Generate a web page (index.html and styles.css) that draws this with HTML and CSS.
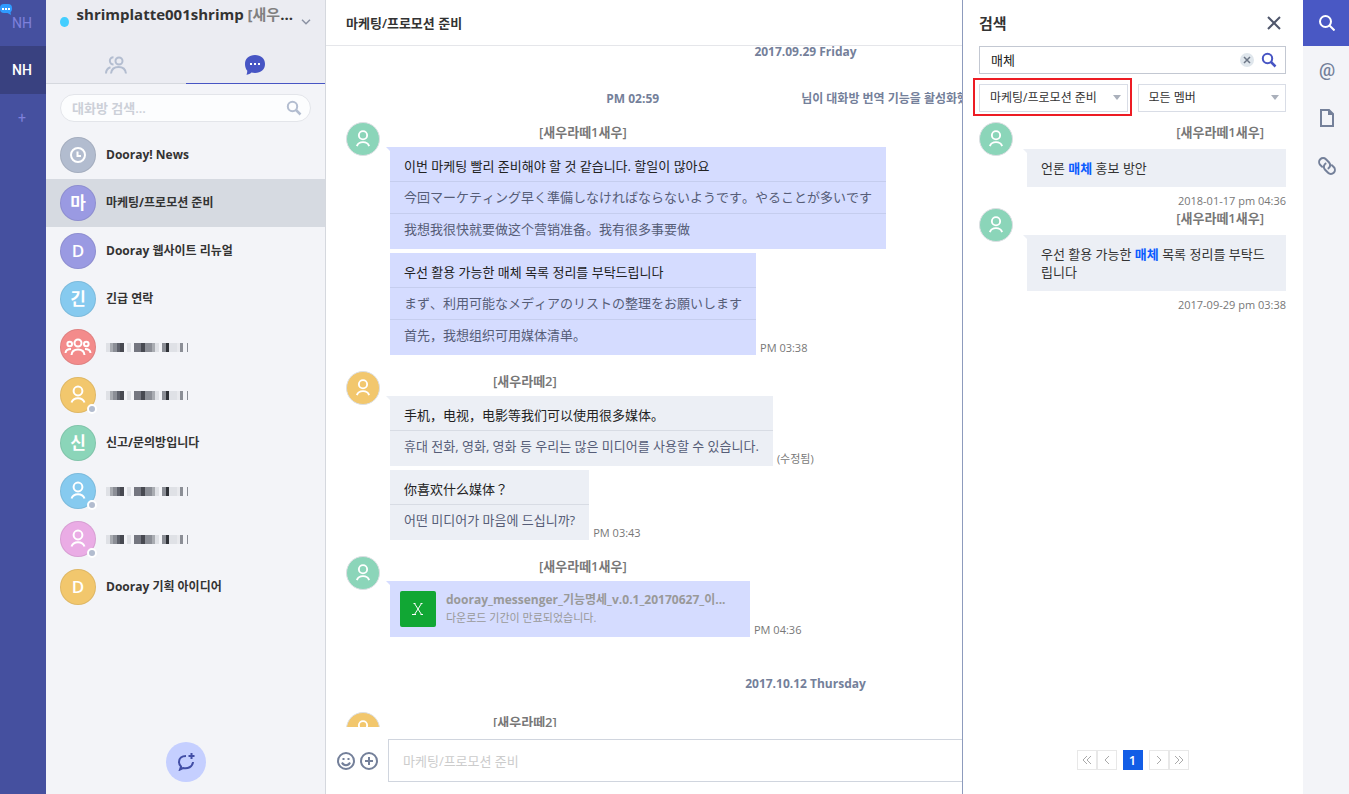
FILE: index.html
```html
<!DOCTYPE html>
<html lang="ko">

<head>
  <meta charset="UTF-8">
  <meta name="viewport" content="width=device-width, initial-scale=1.0">
  <title>Dooray! Messenger</title>
  <link rel="stylesheet" href="styles.css">
</head>

<body>
  <!-- shared icons -->
  <svg class="defs" aria-hidden="true">
    <symbol id="person" viewBox="0 0 34 34">
      <g fill="none" stroke="#fff" stroke-width="2">
        <circle cx="17" cy="13" r="4.4" />
        <path d="M10.5 24.500c1-2.800 3.600-4.200 6.500-4.200s5.500 1.400 6.500 4.200" />
      </g>
    </symbol>
    <symbol id="search" viewBox="0 0 16 16">
      <circle cx="6.500" cy="6.500" r="4.700" fill="none" stroke="currentColor" stroke-width="2" />
      <path d="M10 10l4.500 4.500" stroke="currentColor" stroke-width="2.500" />
    </symbol>
    <symbol id="masked" viewBox="0 0 82 9">
      <path fill="#dfe1e6" d="M0 0h4v9H0zM21 0h4v9h-4zM49 0h4v9h-4zM63 0h8v9h-8z" />
      <path fill="#a9acb2" d="M4 0h3v9H4zM46 0h3v9h-3z" />
      <path fill="#8b8e96" d="M7 0h4v9H7zM39 0h7v9h-7zM56 0h4v9h-4zM74 0h3v9h-3zM81 0h1v9h-1z" />
      <path fill="#5f626c" d="M11 0h3v9h-3z" />
      <path fill="#747680" d="M28 0h7v9h-7z" />
      <path fill="#474951" d="M14 0h4v9h-4zM35 0h4v9h-4z" />
      <path fill="#2f3238" d="M60 0h3v9h-3z" />
      <path fill="#e8e9ed" d="M71 0h3v9h-3z" />
    </symbol>
  </svg>

  <div class="app">
    <nav class="rail">
      <a href="#" class="org">NH
        <svg class="org-badge" width="12" height="12" viewBox="0 0 12 12"><path d="M5 0h3a4 4 0 0 1 4 4v1a4 4 0 0 1-1.500 3.200L11 11 7.500 9H4a4 4 0 0 1-4-4V4a4 4 0 0 1 4-4z" fill="#2f9bff" /><path d="M2 4h2v2H2zM5 4h2v2H5zM8 4h2v2H8z" fill="#fff" /></svg>
      </a>
      <a href="#" class="org active">NH</a>
      <a href="#" class="org add">+</a>
    </nav>

    <aside class="sidebar">
      <div class="profile">
        <span class="status"></span>
        <h1>shrimplatte001shrimp <span>[새우</span>...</h1>
        <svg width="10" height="6" viewBox="0 0 10 6"><path d="M1 .7l4 4 4-4" fill="none" stroke="#8b92a3" stroke-width="1.500" /></svg>
      </div>
      <div class="tabs">
        <button type="button" aria-label="멤버">
          <svg width="24" height="20" viewBox="0 0 24 20"><g fill="none" stroke="#b3bdd0" stroke-width="2"><circle cx="15" cy="6" r="3.500" /><path d="M9.500 2.200A3.500 3.500 0 1 0 9.500 9.500M7 18.500c.5-4.500 3.500-6.500 7.500-6.500s7 2 7.500 6.500M2 18.500c0-3.500 2-5.500 4.500-6.300" /></g></svg>
        </button>
        <button type="button" class="active" aria-label="대화">
          <svg width="20" height="20" viewBox="0 0 20 20"><path d="M10 0c6 0 10 3.600 10 9s-4 9-10 9c-1.300 0-2.500-.2-3.600-.5C5 18.800 3.500 19.700 1.500 19.800c.5-1.200.8-2.600.8-4C.8 14.200 0 11.800 0 9c0-5.400 4-9 10-9z" fill="#4755c4" /><path d="M5 8h2v2H5zM9 8h2v2H9zM13 8h2v2h-2z" fill="#fff" /></svg>
        </button>
      </div>
      <form class="room-search">
        <input type="text" placeholder="대화방 검색..." aria-label="대화방 검색">
        <svg width="16" height="16"><use href="#search" /></svg>
      </form>
      <ul class="rooms">
        <li><a href="#"><span class="badge gray"><svg width="16" height="16" viewBox="0 0 16 16"><g fill="none" stroke="#fff" stroke-width="2"><circle cx="8" cy="8" r="7" /><path d="M7.500 4.500V9H11" /></g></svg></span>Dooray! News</a></li>
        <li class="active"><a href="#"><span class="badge purple">마</span>마케팅/프로모션 준비</a></li>
        <li><a href="#"><span class="badge purple">D</span>Dooray 웹사이트 리뉴얼</a></li>
        <li><a href="#"><span class="badge blue">긴</span>긴급 연락</a></li>
        <li><a href="#" aria-label="그룹"><span class="badge red"><svg width="28" height="18" viewBox="0 0 28 18"><g fill="none" stroke="#fff" stroke-width="2"><circle cx="14" cy="5" r="3.500" /><path d="M7.500 17c.3-3.500 3-5.500 6.500-5.500s6.200 2 6.500 5.500" /><circle cx="5.700" cy="6" r="2.300" /><circle cx="22.300" cy="6" r="2.300" /><path d="M1.500 15c.2-2.500 2-4 5.500-4M26.500 15c-.2-2.500-2-4-5.500-4" /></g></svg></span><svg width="82" height="9"><use href="#masked" /></svg></a></li>
        <li><a href="#" aria-label="멤버"><span class="badge yellow user"><svg width="34" height="34"><use href="#person" /></svg></span><svg width="82" height="9"><use href="#masked" /></svg></a></li>
        <li><a href="#"><span class="badge green">신</span>신고/문의방입니다</a></li>
        <li><a href="#" aria-label="멤버"><span class="badge blue user"><svg width="34" height="34"><use href="#person" /></svg></span><svg width="82" height="9"><use href="#masked" /></svg></a></li>
        <li><a href="#" aria-label="멤버"><span class="badge pink user"><svg width="34" height="34"><use href="#person" /></svg></span><svg width="82" height="9"><use href="#masked" /></svg></a></li>
        <li><a href="#"><span class="badge yellow">D</span>Dooray 기획 아이디어</a></li>
      </ul>
      <button type="button" class="new-chat" aria-label="새 대화">
        <svg width="18" height="18" viewBox="0 0 18 18"><g fill="none" stroke="#424ea6" stroke-width="2"><path d="M9 3C4.800 3 2 5.300 2 9c0 2 .8 3.300 2 4.500L3 16.500 6 15c4.800 1 9.500-1 10-6" /><path d="M14.500 0v6M11.500 3h6" /></g></svg>
      </button>
    </aside>

    <main class="chat">
      <header class="chat-header">
        <h2>마케팅/프로모션 준비</h2>
      </header>

      <div class="messages">
        <p class="date">2017.09.29 Friday</p>
        <p class="notice"><span>PM 02:59</span><span>님이 대화방 번역 기능을 활성화했습니다.</span></p>

        <section class="group">
          <svg class="avatar green" width="34" height="34"><use href="#person" /></svg>
          <div class="bubbles mine">
            <h3 class="name long">[새우라떼1새우]</h3>
            <div class="line">
              <div class="bubble">
                <p>이번 마케팅 빨리 준비해야 할 것 같습니다. 할일이 많아요</p>
                <p lang="ja">今回マーケティング早く準備しなければならないようです。やることが多いです</p>
                <p lang="zh-CN">我想我很快就要做这个营销准备。我有很多事要做</p>
              </div>
            </div>
            <div class="line">
              <div class="bubble">
                <p>우선 활용 가능한 매체 목록 정리를 부탁드립니다</p>
                <p lang="ja">まず、利用可能なメディアのリストの整理をお願いします</p>
                <p lang="zh-CN">首先，我想组织可用媒体清单。</p>
              </div>
              <span class="time">PM 03:38</span>
            </div>
          </div>
        </section>

        <section class="group">
          <svg class="avatar yellow" width="34" height="34"><use href="#person" /></svg>
          <div class="bubbles">
            <h3 class="name">[새우라떼2]</h3>
            <div class="line">
              <div class="bubble">
                <p lang="zh-CN">手机，电视，电影等我们可以使用很多媒体。</p>
                <p>휴대 전화, 영화, 영화 등 우리는 많은 미디어를 사용할 수 있습니다.</p>
              </div>
              <span class="time">(수정됨)</span>
            </div>
            <div class="line">
              <div class="bubble">
                <p lang="zh-CN">你喜欢什么媒体<span lang="ja">？</span></p>
                <p>어떤 미디어가 마음에 드십니까?</p>
              </div>
              <span class="time">PM 03:43</span>
            </div>
          </div>
        </section>

        <section class="group">
          <svg class="avatar green" width="34" height="34"><use href="#person" /></svg>
          <div class="bubbles mine">
            <h3 class="name long">[새우라떼1새우]</h3>
            <div class="line">
              <div class="bubble file">
                <span class="file-icon"><svg width="12" height="14" viewBox="0 0 12 14"><path d="M1.500 1.500h2M8.500 1.500h2M0 12.500h4M8.500 12.500h2.500M2.500 1.500l7 11M9.500 1.500l-7 11" fill="none" stroke="#fff" /></svg></span>
                <div>
                  <strong>dooray_messenger_기능명세_v.0.1_20170627_이...</strong>
                  <small>다운로드 기간이 만료되었습니다.</small>
                </div>
              </div>
              <span class="time">PM 04:36</span>
            </div>
          </div>
        </section>

        <p class="date">2017.10.12 Thursday</p>

        <section class="group">
          <svg class="avatar yellow" width="34" height="34"><use href="#person" /></svg>
          <div class="bubbles">
            <h3 class="name">[새우라떼2]</h3>
          </div>
        </section>
      </div>

      <form class="composer">
        <button type="button" aria-label="이모티콘"><svg width="18" height="18" viewBox="0 0 18 18"><g fill="none" stroke="#74809a" stroke-width="2"><circle cx="9" cy="9" r="8" /><path d="M5 10.500c.8 1.800 2.200 2.700 4 2.700s3.200-.9 4-2.700M5.500 7h2M10.500 7h2" /></g></svg></button>
        <button type="button" aria-label="파일 첨부"><svg width="18" height="18" viewBox="0 0 18 18"><g fill="none" stroke="#74809a" stroke-width="2"><circle cx="9" cy="9" r="8" /><path d="M9 5v8M5 9h8" /></g></svg></button>
        <input type="text" placeholder="마케팅/프로모션 준비" aria-label="메시지">
      </form>

      <aside class="search-panel">
        <header>
          <h2>검색</h2>
          <button type="button" aria-label="닫기"><svg width="14" height="14" viewBox="0 0 14 14"><path d="M1 1l12 12M13 1L1 13" stroke="#4f566b" stroke-width="2" /></svg></button>
        </header>
        <form class="query">
          <input type="text" value="매체" aria-label="검색어">
          <button type="button" aria-label="지우기"><svg width="14" height="14" viewBox="0 0 14 14"><circle cx="7" cy="7" r="7" fill="#dfe6ec" /><path d="M4 4l6 6M10 4l-6 6" stroke="#6c7686" stroke-width="1.500" /></svg></button>
          <button type="submit" aria-label="검색"><svg width="16" height="16"><use href="#search" /></svg></button>
        </form>
        <div class="filters">
          <div class="select marked">
            <select aria-label="대화방"><option>마케팅/프로모션 준비</option></select>
          </div>
          <div class="select">
            <select aria-label="멤버"><option>모든 멤버</option></select>
          </div>
        </div>

        <article class="result">
          <svg class="avatar green" width="34" height="34"><use href="#person" /></svg>
          <div>
            <h3>[새우라떼1새우]</h3>
            <p>언론 <mark>매체</mark> 홍보 방안</p>
            <time>2018-01-17 pm 04:36</time>
          </div>
        </article>
        <article class="result">
          <svg class="avatar green" width="34" height="34"><use href="#person" /></svg>
          <div>
            <h3>[새우라떼1새우]</h3>
            <p>우선 활용 가능한 <mark>매체</mark> 목록 정리를 부탁드립니다</p>
            <time>2017-09-29 pm 03:38</time>
          </div>
        </article>

        <nav class="paging">
          <a href="#" aria-label="처음"><svg width="10" height="10" viewBox="0 0 10 10"><path d="M5 1L1 5l4 4M9 1L5 5l4 4" /></svg></a>
          <a href="#" aria-label="이전"><svg width="10" height="10" viewBox="0 0 10 10"><path d="M7 1L3 5l4 4" /></svg></a>
          <a href="#" class="active">1</a>
          <a href="#" aria-label="다음"><svg width="10" height="10" viewBox="0 0 10 10"><path d="M3 1l4 4-4 4" /></svg></a>
          <a href="#" aria-label="마지막"><svg width="10" height="10" viewBox="0 0 10 10"><path d="M1 1l4 4-4 4M5 1l4 4-4 4" /></svg></a>
        </nav>
      </aside>
    </main>

    <nav class="tools">
      <a href="#" class="active" aria-label="검색"><svg width="16" height="16" viewBox="0 0 16 16"><g fill="none" stroke="#fff" stroke-width="2"><circle cx="6.500" cy="6.500" r="5.500" /><path d="M10.500 10.500l5 5" /></g></svg></a>
      <a href="#" aria-label="멘션">@</a>
      <a href="#" aria-label="파일"><svg width="14" height="18" viewBox="0 0 14 18"><path d="M1 1h8l4 4v12H1z" fill="none" stroke="#74809a" stroke-width="2" /><path d="M8 0l6 6H8z" fill="#74809a" /></svg></a>
      <a href="#" aria-label="링크"><svg width="18" height="18" viewBox="0 0 18 18"><g transform="rotate(45 9 9)" fill="none" stroke="#74809a" stroke-width="2"><path d="M7 13H3.500a4 4 0 0 1 0-8H8a4 4 0 0 1 3.500 5.500" /><path d="M11 5h3.500a4 4 0 0 1 0 8H10a4 4 0 0 1-3.500-5.500" /></g></svg></a>
    </nav>
  </div>
</body>

</html>
```
FILE: styles.css
```css
*, ::before, ::after {
  box-sizing: border-box;
}

body {
  margin: 0;
  font-family: "Open Sans", "Noto Sans CJK KR", sans-serif;
  font-size: 13px;
  line-height: 18px;
  color: #333;
}

:lang(ja) {
  font-family: "Noto Sans CJK JP", sans-serif;
  font-kerning: none;
}

:lang(zh-CN) {
  font-family: "Noto Sans CJK SC", sans-serif;
}

h1, h2, h3, p, ul {
  margin: 0;
  padding: 0;
}

a {
  color: inherit;
  text-decoration: none;
}

button {
  display: flex;
  padding: 0;
  border: 0;
  background: none;
  color: inherit;
  cursor: pointer;
}

input, select {
  font: inherit;
  color: inherit;
  min-width: 0;
}

svg {
  display: block;
  flex-shrink: 0;
}

.defs {
  position: absolute;
  width: 0;
  height: 0;
}

.app {
  display: flex;
  height: 100vh;
}

.gray { background-color: #b2bccf; }
.purple { background-color: #9a9ae2; }
.blue { background-color: #86caef; }
.red { background-color: #f38b8b; }
.yellow { background-color: #f2c76d; }
.green { background-color: #8bd5b9; }
.pink { background-color: #eaace5; }

/* left rail */
.rail {
  width: 46px;
  flex-shrink: 0;
  background-color: #45509f;
}

.org {
  position: relative;
  display: flex;
  align-items: center;
  justify-content: center;
  height: 48px;
  padding-right: 2px;
  color: #7e80dc;
  font-family: Roboto, sans-serif;
  font-size: 14px;
}

.org:first-child {
  height: 46px;
}

.org.active {
  background-color: #394180;
  color: white;
  font-weight: 500;
}

.org-badge {
  position: absolute;
  left: 0;
  top: 4px;
}

/* room list */
.sidebar {
  display: flex;
  flex-direction: column;
  width: 280px;
  flex-shrink: 0;
  background-color: #f3f4f8;
  border-right: 1px solid #d5d8de;
}

.profile {
  display: flex;
  align-items: center;
  gap: 8px;
  height: 44px;
  padding: 0 14px;
  background-color: #ebecf2;
}

.status {
  width: 10px;
  height: 10px;
  border-radius: 50%;
  background-color: #44ceff;
}

.profile h1 {
  flex: 1;
  padding-bottom: 16px;
  font-size: 15px;
  font-weight: 700;
  line-height: 20px;
  white-space: nowrap;
}

.profile h1 span {
  color: #808080;
}

.tabs {
  display: flex;
  background-color: #ebecf2;
}

.tabs button {
  flex: 1;
  align-items: center;
  justify-content: center;
  height: 40px;
  padding-top: 2px;
  border-bottom: 1px solid #d5d8de;
}

.tabs .active {
  border-color: #4755c4;
}

.room-search {
  display: flex;
  align-items: center;
  margin: 10px 14px 9px;
  padding: 0 8px 0 11px;
  height: 28px;
  background-color: #fcfdfe;
  border: 1px solid #e3e5ea;
  border-radius: 14px;
  color: #b3bdd0;
}

.room-search input {
  flex: 1;
  padding: 0;
  border: 0;
  background: none;
  font-size: 13px;
  font-weight: 600;
}

.room-search input::placeholder {
  color: #ccd0d8;
}

.rooms {
  list-style: none;
}

.rooms a {
  display: flex;
  align-items: center;
  gap: 10px;
  height: 48px;
  padding: 0 14px;
  font-size: 12px;
  font-weight: 700;
}

.rooms .active {
  background-color: #d6dae1;
}

.badge {
  position: relative;
  display: flex;
  align-items: center;
  justify-content: center;
  width: 36px;
  height: 36px;
  border: 1px solid rgba(0, 0, 0, 0.08);
  border-radius: 50%;
  color: white;
  font-size: 17px;
  font-weight: 600;
}

/* presence dot */
.user::after {
  content: "";
  position: absolute;
  right: -2px;
  bottom: -2px;
  width: 10px;
  height: 10px;
  border: 2px solid white;
  border-radius: 50%;
  background-color: #b2bccf;
}

.new-chat {
  align-items: center;
  justify-content: center;
  width: 40px;
  height: 40px;
  margin: auto auto 12px;
  border-radius: 50%;
  background-color: #c5cfff;
}

/* conversation */
.chat {
  position: relative;
  display: flex;
  flex-direction: column;
  flex: 1;
  min-width: 0;
}

.chat-header {
  display: flex;
  align-items: center;
  height: 46px;
  padding: 0 20px;
  border-bottom: 1px solid #e5e6ea;
}

.chat-header h2 {
  font-size: 13px;
  font-weight: 600;
}

.messages {
  flex: 1;
  min-height: 0;
  overflow: hidden;
  padding: 0 18px 0 20px;
}

.date, .notice {
  font-size: 12px;
  line-height: 12px;
  font-weight: 700;
  color: #74809a;
  text-align: center;
}

.date {
  padding-right: 20px;
}

.notice {
  display: flex;
  justify-content: center;
  gap: 142px;
  margin: 35px 0 17px;
  padding-right: 20px;
}

.avatar {
  border: 1px solid #dcdfe3;
  border-radius: 50%;
}

.group {
  display: flex;
  gap: 10px;
  margin-bottom: 16px;
}

.group + .date {
  margin: 41px 0 22px;
}

.name {
  height: 21px;
  padding-left: 103px;
  font-size: 13px;
  line-height: 20px;
  color: #777;
  font-weight: 600;
}

.long {
  padding-left: 149px;
}

.line {
  display: flex;
  align-items: flex-end;
  gap: 4px;
  margin-top: 4px;
}

.bubble {
  position: relative;
  background-color: #eceff5;
}

.mine .bubble {
  background-color: #d5dcff;
}

/* bubble tail, first bubble of a group only */
.name + .line .bubble::before,
.result p::before {
  content: "";
  position: absolute;
  left: -4px;
  top: 0;
  border-top: 4px solid #eceff5;
  border-left: 4px solid transparent;
}

.mine .name + .line .bubble::before {
  border-top-color: #d5dcff;
}

.bubble p {
  padding: 6px 14px 7px;
  border-bottom: 1px solid #d8dce4;
  color: #565d77;
}

.mine .bubble p {
  border-color: #c5cdee;
}

.bubble p:first-child {
  padding-top: 10px;
  padding-bottom: 6px;
  color: #222;
}

.mine .bubble p:last-child, .bubble p:last-child {
  padding-bottom: 11px;
  border: 0;
}

.time {
  font-size: 11px;
  line-height: 14px;
  color: #777;
}

.file {
  display: flex;
  gap: 10px;
  width: 360px;
  padding: 10px;
  color: #999;
}

.file-icon {
  display: flex;
  align-items: center;
  justify-content: center;
  width: 36px;
  height: 36px;
  border-radius: 2px;
  background-color: #11a734;
}

.file strong, .file small {
  display: block;
  font-size: 12px;
  font-weight: 700;
  white-space: nowrap;
}

.file small {
  font-size: 11px;
  font-weight: 400;
}

.composer {
  display: flex;
  align-items: center;
  gap: 5px;
  padding: 12px 18px 12px 11px;
}

.composer input {
  flex: 1;
  height: 43px;
  margin-left: 5px;
  padding: 0 14px;
  border: 1px solid #d0d5de;
}

.composer input::placeholder {
  color: #ccc;
}

/* search results, over the conversation */
.search-panel {
  position: absolute;
  top: 0;
  right: 0;
  bottom: 0;
  display: flex;
  flex-direction: column;
  width: 341px;
  padding: 0 17px 24px 16px;
  background-color: white;
  border-left: 1px solid #8d9bbd;
}

.search-panel header {
  display: flex;
  align-items: center;
  justify-content: space-between;
  height: 46px;
  padding-right: 5px;
}

.search-panel header h2 {
  font-size: 15px;
  font-weight: 700;
}

.query {
  display: flex;
  align-items: center;
  gap: 7px;
  height: 28px;
  padding: 0 8px 0 11px;
  border: 1px solid #c3c8d2;
  color: #4755c4;
}

.query input {
  flex: 1;
  padding: 0;
  border: 0;
  font-size: 13px;
  color: #222;
}

.filters {
  display: flex;
  gap: 10px;
  margin: 10px 0;
}

.select {
  position: relative;
  flex: 1;
}

.select select {
  display: block;
  width: 100%;
  height: 28px;
  padding: 0 10px;
  border: 1px solid #d9dde6;
  border-radius: 0;
  background-color: white;
  font-size: 12px;
  appearance: none;
}

.select::after {
  content: "";
  position: absolute;
  right: 7px;
  top: 11px;
  border: 4px solid transparent;
  border-top: 5px solid #aab0bb;
  border-bottom: 0;
}

/* red frame round the room filter */
.marked::before {
  content: "";
  position: absolute;
  inset: -6px -4px -4px -6px;
  border: 2px solid #ed1c24;
  pointer-events: none;
}

.result {
  display: flex;
  gap: 14px;
}

.result div {
  flex: 1;
}

.result h3 {
  padding-right: 22px;
  font-size: 13px;
  font-weight: 600;
  line-height: 20px;
  color: #777;
  text-align: right;
}

.result p {
  position: relative;
  margin: 7px 0;
  padding: 10px 14px;
  background-color: #eceff5;
}

.result mark {
  background: none;
  color: #0b5cff;
  font-weight: 700;
}

.result time {
  display: block;
  font-size: 11px;
  line-height: 14px;
  color: #777;
  text-align: right;
}

.paging {
  display: flex;
  justify-content: center;
  margin-top: auto;
}

.paging a {
  display: flex;
  align-items: center;
  justify-content: center;
  width: 20px;
  height: 20px;
  border: 1px solid #e8e8e8;
}

.paging path {
  fill: none;
  stroke: #aaa;
}

.paging .active {
  margin: 0 6px;
  border-color: #125de6;
  background-color: #125de6;
  color: white;
  font-weight: 600;
}

/* right rail */
.tools {
  width: 46px;
  flex-shrink: 0;
  background-color: #f3f4f8;
}

.tools a {
  display: flex;
  align-items: center;
  justify-content: center;
  height: 48px;
  padding-left: 2px;
  color: #74809a;
  font-family: Roboto, sans-serif;
  font-size: 18px;
  font-weight: 500;
}

.tools .active {
  height: 46px;
  background-color: #4958c4;
}
```
